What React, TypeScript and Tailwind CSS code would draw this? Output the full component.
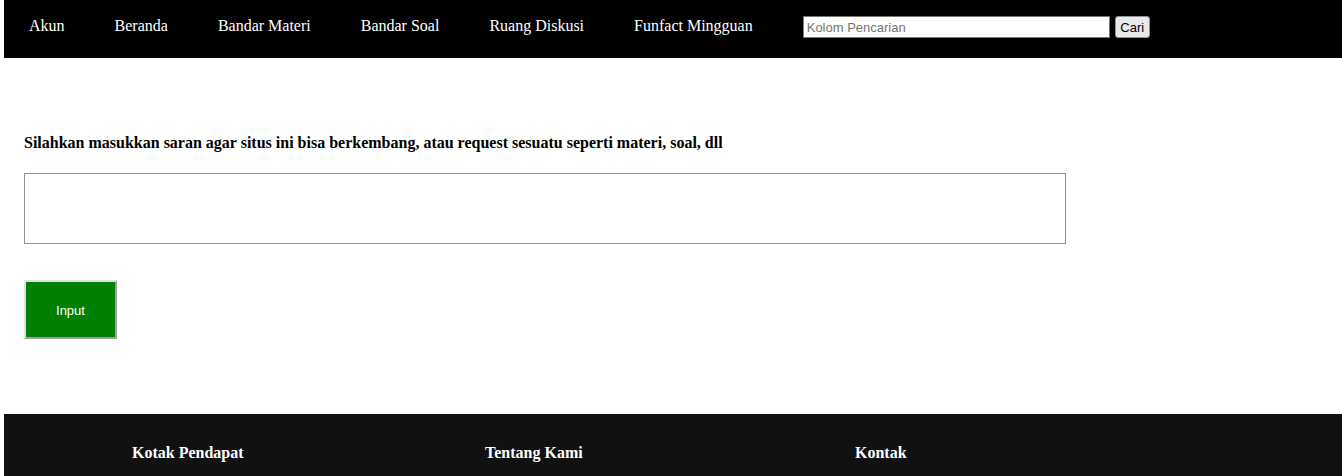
export default function App() {
  const links = ["Akun", "Beranda", "Bandar Materi", "Bandar Soal", "Ruang Diskusi", "Funfact Mingguan"];
  const sans = { fontFamily: '"Liberation Sans", Arial, sans-serif', fontSize: 13 };
  return (
    <div className="pl-[4px] bg-white min-h-[476px] overflow-hidden" style={{ fontFamily: '"Liberation Serif", serif' }}>
      <nav className="h-[58px] bg-black flex items-start pt-[16px]">
        {links.map((l) => (
          <a key={l} className="px-[25px] pt-[1px] text-[16px] leading-[18px] text-white whitespace-nowrap">
            {l}
          </a>
        ))}
        <div className="flex items-start ml-[25px] gap-[5px]">
          <input
            placeholder="Kolom Pencarian"
            className="w-[307px] h-[22px] bg-white border border-[#767676] px-[3px] text-black placeholder:text-[#757575] outline-none"
            style={sans}
          />
          <button
            className="h-[22px] w-[35px] bg-[#e9e9ed] border border-[#8f8f9d] rounded-[3px] text-black leading-none"
            style={sans}
          >
            Cari
          </button>
        </div>
      </nav>
      <main className="pl-[20px] pt-[76px]">
        <h3 className="text-[16px] leading-[18px] font-bold text-black">
          Silahkan masukkan saran agar situs ini bisa berkembang, atau request sesuatu seperti materi, soal, dll
        </h3>
        <textarea className="mt-[21px] block w-[1042px] h-[71px] border border-[#8f8f9d] bg-white resize-none outline-none" />
        <button
          className="mt-[36px] block w-[93px] h-[59px] pt-[2px] bg-[#008000] text-white border-2 border-t-[#e3e3e3] border-l-[#e3e3e3] border-r-[#a0a0a0] border-b-[#a0a0a0]"
          style={sans}
        >
          Input
        </button>
      </main>
      <footer className="mt-[75px] bg-[#111111] h-[62px] flex items-start pt-[30px] pl-[128px]">
        <h4 className="w-[353px] text-[16px] leading-[18px] font-bold text-white">Kotak Pendapat</h4>
        <h4 className="w-[370px] text-[16px] leading-[18px] font-bold text-white">Tentang Kami</h4>
        <h4 className="text-[16px] leading-[18px] font-bold text-white">Kontak</h4>
      </footer>
    </div>
  );
}
